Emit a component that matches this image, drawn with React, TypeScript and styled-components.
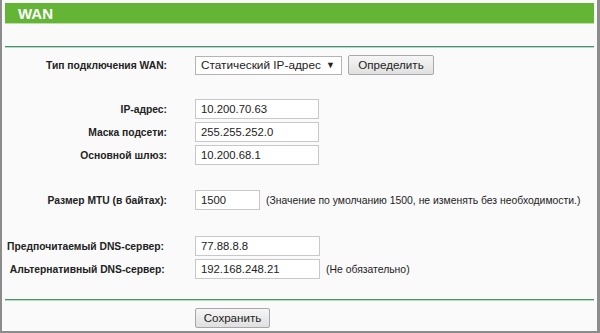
import React from "react";
import styled, { createGlobalStyle } from "styled-components";

const Global = createGlobalStyle`
  html, body { margin: 0; padding: 0; background: #fafafa; }
  body { font-family: "Liberation Sans", Arial, sans-serif; }
  * { box-sizing: border-box; }
`;

const Frame = styled.div`
  width: 600px;
  height: 333px;
  border-left: 2px solid #8c8c8c;
  border-right: 3px solid #8c8c8c;
  border-bottom: 2px solid #8c8c8c;
  background: #fafafa;
  padding: 3px 3px 0 3px;
  display: flex;
  flex-direction: column;
  overflow: hidden;
`;

const Header = styled.div`
  height: 21px;
  background: #64b536;
  border-bottom: 1px solid #b9e0a0;
  color: #fff;
  font-weight: bold;
  font-size: 15px;
  line-height: 21px;
  padding-left: 13px;
`;

const Rule = styled.div<{ $top: number }>`
  margin-top: ${(p) => p.$top}px;
  height: 2px;
  border-top: 1px solid #4f8f6f;
  border-bottom: 1px solid #b3dcc4;
`;

const Form = styled.div`
  display: grid;
  grid-template-columns: 162px 1fr;
  column-gap: 28px;
  align-items: center;
  color: #111;
`;

const Label = styled.div<{ $align?: string; $mt?: number }>`
  font-weight: bold;
  font-size: 10.3px;
  text-align: ${(p) => p.$align || "right"};
  margin-top: ${(p) => p.$mt || 0}px;
  padding-left: ${(p) => (p.$align === "left" ? 2 : 0)}px;
  white-space: nowrap;
  color: #222;
`;

const Field = styled.div<{ $mt?: number }>`
  display: flex;
  align-items: center;
  gap: 6px;
  margin-top: ${(p) => p.$mt || 0}px;
`;

const TextBox = styled.div<{ $w: number }>`
  width: ${(p) => p.$w}px;
  height: 20px;
  background: #fff;
  border: 1px solid #c8c8c8;
  font-size: 11.3px;
  line-height: 18px;
  padding-left: 5px;
  color: #222;
`;

const Select = styled.div`
  width: 147px;
  height: 19px;
  background: #fff;
  border: 1px solid #b4b4b4;
  font-size: 11.8px;
  line-height: 17px;
  padding-left: 5px;
  display: flex;
  justify-content: space-between;
  padding-right: 6px;
  color: #222;
`;

const Arrow = styled.span`
  font-size: 9px;
  line-height: 17px;
`;

const Button = styled.div<{ $w: number }>`
  width: ${(p) => p.$w}px;
  height: 20px;
  border: 1px solid #a8a8a8;
  border-radius: 2px;
  background: linear-gradient(#f6f6f6, #e0e0e0);
  font-size: 11.6px;
  line-height: 18px;
  text-align: center;
  color: #222;
`;

const Note = styled.span`
  font-size: 10.4px;
  color: #222;
  white-space: nowrap;
`;

const Spacer = styled.div``;

export default function App() {
  return (
    <>
      <Global />
      <Frame>
        <Header>WAN</Header>
        <Rule $top={22} />
        <Form>
          <Label $mt={7}>Тип подключения WAN:</Label>
          <Field $mt={7}>
            <Select>
              <span>Статический IP-адрес</span>
              <Arrow>▼</Arrow>
            </Select>
            <Button $w={86}>Определить</Button>
          </Field>

          <Label $mt={24}>IP-адрес:</Label>
          <Field $mt={24}>
            <TextBox $w={124}>10.200.70.63</TextBox>
          </Field>
          <Label $mt={3}>Маска подсети:</Label>
          <Field $mt={3}>
            <TextBox $w={124}>255.255.252.0</TextBox>
          </Field>
          <Label $mt={3}>Основной шлюз:</Label>
          <Field $mt={3}>
            <TextBox $w={124}>10.200.68.1</TextBox>
          </Field>

          <Label $mt={25}>Размер MTU (в байтах):</Label>
          <Field $mt={25}>
            <TextBox $w={65}>1500</TextBox>
            <Note>(Значение по умолчанию 1500, не изменять без необходимости.)</Note>
          </Field>

          <Label $align="left" $mt={26}>Предпочитаемый DNS-сервер:</Label>
          <Field $mt={26}>
            <TextBox $w={125}>77.88.8.8</TextBox>
          </Field>
          <Label $align="left" $mt={3}>&nbsp;Альтернативный DNS-сервер:</Label>
          <Field $mt={3}>
            <TextBox $w={125}>192.168.248.21</TextBox>
            <Note>(Не обязательно)</Note>
          </Field>
        </Form>
        <Rule $top={20} />
        <Form>
          <Spacer />
          <Field $mt={7}>
            <Button $w={75}>Сохранить</Button>
          </Field>
        </Form>
      </Frame>
    </>
  );
}
